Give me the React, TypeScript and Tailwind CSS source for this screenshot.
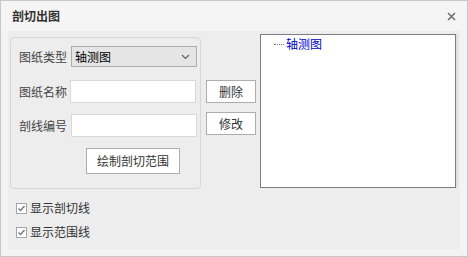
import React from 'react';

const font = { fontFamily: '"Noto Sans CJK SC", "Noto Sans", sans-serif' };

const CheckRow = ({ label }: { label: string }) => (
  <div className="flex items-center h-[16px]">
    <svg width="11" height="11" viewBox="0 0 11 11" className="shrink-0">
      <rect x="0.5" y="0.5" width="10" height="10" fill="#ffffff" stroke="#a6a6a6" />
      <path d="M2.5 5.5 L4.5 7.5 L8.5 3" fill="none" stroke="#7a7a7a" strokeWidth="1.4" />
    </svg>
    <span className="ml-[3px] text-[12px] leading-none text-[#333]">{label}</span>
  </div>
);

export default function App() {
  return (
    <div
      className="w-[468px] h-[257px] bg-[#f3f3f3] border border-[#c8c8c8] flex flex-col"
      style={font}
    >
      {/* title bar */}
      <div className="h-[30px] shrink-0 bg-[#f5f5f5] flex items-center justify-between pl-[11px] pr-[11px]">
        <span className="text-[12px] font-bold text-[#333] leading-none">剖切出图</span>
        <svg width="9" height="9" viewBox="0 0 9 9">
          <path d="M1 1 L8 8 M8 1 L1 8" stroke="#707070" strokeWidth="1.6" />
        </svg>
      </div>

      {/* body */}
      <div className="flex-1 flex px-[7px] pb-[7px]">
        <div className="flex-1 bg-[#ededed] flex pl-[2px] pt-[3px]">
          {/* left column */}
          <div className="w-[191px] shrink-0 flex flex-col pt-[3px]">
            <div className="h-[152px] border border-[#d6d6d6] rounded-[4px] flex flex-col pl-[8px] pr-[2px] pt-[8px]">
              <div className="flex items-center h-[21px]">
                <span className="w-[52px] shrink-0 text-[12px] text-[#444] leading-none">图纸类型</span>
                <div className="w-[126px] shrink-0 h-[21px] bg-[#e5e5e5] border border-[#adadad] flex items-center justify-between pl-[3px] pr-[6px]">
                  <span className="text-[12px] text-black leading-none">轴测图</span>
                  <svg width="9" height="6" viewBox="0 0 9 6">
                    <path d="M1 1 L4.5 4.5 L8 1" fill="none" stroke="#606060" strokeWidth="1.1" />
                  </svg>
                </div>
              </div>
              <div className="flex items-center h-[23px] mt-[13px]">
                <span className="w-[51px] shrink-0 text-[12px] text-[#444] leading-none">图纸名称</span>
                <div className="w-[126px] shrink-0 h-[23px] bg-white border border-[#d9d9d9]" />
              </div>
              <div className="flex items-center h-[23px] mt-[11px]">
                <span className="w-[52px] shrink-0 text-[12px] text-[#444] leading-none">剖线编号</span>
                <div className="w-[126px] shrink-0 h-[23px] bg-white border border-[#d9d9d9]" />
              </div>
              <div className="flex mt-[11px] pl-[67px]">
                <div className="w-[94px] h-[26px] bg-white border border-[#adadad] flex items-center justify-center text-[12px] text-[#333] leading-none">
                  绘制剖切范围
                </div>
              </div>
            </div>
            <div className="flex flex-col gap-[8px] pl-[6px] mt-[11px]">
              <CheckRow label="显示剖切线" />
              <CheckRow label="显示范围线" />
            </div>
          </div>

          {/* buttons column */}
          <div className="w-[50px] shrink-0 ml-[5px] flex flex-col pt-[46px] gap-[9px]">
            <div className="h-[23px] bg-white border border-[#adadad] flex items-center justify-center text-[12px] text-[#333] leading-none">
              删除
            </div>
            <div className="h-[23px] bg-white border border-[#adadad] flex items-center justify-center text-[12px] text-[#333] leading-none">
              修改
            </div>
          </div>

          {/* tree */}
          <div className="ml-[4px] w-[196px] shrink-0 h-[154px] bg-white border-[1.5px] border-[#7d7d88] shadow-[2px_0_0_#e0e0e0] pt-[2px] pl-[13px]">
            <div className="flex items-center h-[14px]">
              <span className="w-[10px] border-t border-dotted border-[#777]" />
              <span className="ml-[2px] text-[12px] text-[#0000cc] leading-none">轴测图</span>
            </div>
          </div>
        </div>
      </div>
    </div>
  );
}
